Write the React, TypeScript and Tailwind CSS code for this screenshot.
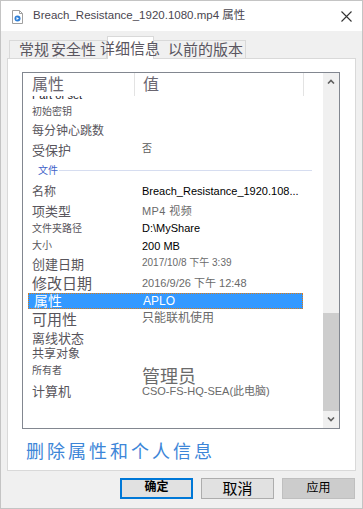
const font = "font-['Liberation_Sans','Noto_Sans_CJK_SC',sans-serif]";

type Row = {
  h: string;
  label: string;
  lc: string;
  value?: string;
  vc?: string;
  kind?: "group" | "selected" | "clip";
};

const rows: Row[] = [
  { h: "h-[6px]", label: "Part of set", lc: "text-[11px]", kind: "clip" },
  { h: "h-[19px]", label: "初始密钥", lc: "text-[10px]" },
  { h: "h-[20px]", label: "每分钟心跳数", lc: "text-[12px]" },
  { h: "h-[19px]", label: "受保护", lc: "text-[13px]", value: "否", vc: "text-[10px] text-[#5c5c5c] -mt-[3px]" },
  { h: "h-[21px]", label: "文件", lc: "", kind: "group" },
  { h: "h-[21px]", label: "名称", lc: "text-[12px]", value: "Breach_Resistance_1920.108...", vc: "text-[11px] text-black" },
  { h: "h-[18px]", label: "项类型", lc: "text-[13px]", value: "MP4 视频", vc: "text-[11px] text-[#6a6a6a] tracking-[0.4px]" },
  { h: "h-[17px]", label: "文件夹路径", lc: "text-[10px]", value: "D:\\MyShare", vc: "text-[11px] text-black" },
  { h: "h-[18px]", label: "大小", lc: "text-[10px]", value: "200 MB", vc: "text-[11px] text-black" },
  { h: "h-[19px]", label: "创建日期", lc: "text-[13px]", value: "2017/10/8 下午 3:39", vc: "text-[10px] text-[#6a6a6a] -mt-[3px]" },
  { h: "h-[19px]", label: "修改日期", lc: "text-[15px]", value: "2016/9/26 下午 12:48", vc: "text-[11px] text-[#6a6a6a]" },
  { h: "h-[16px]", label: "属性", lc: "text-[14px]", value: "APLO", vc: "text-[12px]", kind: "selected" },
  { h: "h-[21px]", label: "可用性", lc: "text-[15px]", value: "只能联机使用", vc: "text-[12px] text-[#6a6a6a] -mt-[4px]" },
  { h: "h-[16px]", label: "离线状态", lc: "text-[13px]" },
  { h: "h-[16px]", label: "共享对象", lc: "text-[12px]" },
  { h: "h-[22px]", label: "所有者", lc: "text-[10px] -mt-[4px]", value: "管理员", vc: "text-[18px] text-[#6a6a6a] mt-[8px]" },
  { h: "h-[15px]", label: "计算机", lc: "text-[13px]", value: "CSO-FS-HQ-SEA(此电脑)", vc: "text-[11px] text-[#6a6a6a] -mt-[1px]" },
];

const FileIcon = () => (
  <svg width="11" height="14" viewBox="0 0 11 14">
    <path d="M0.5 0.5h7l3 3v10h-10z" fill="#fff" stroke="#a0a0a0" />
    <path d="M7.5 0.5v3h3" fill="none" stroke="#a0a0a0" />
    <circle cx="5.5" cy="8.5" r="3" fill="#2f7fd6" />
    <path d="M4.5 7v3l2.5-1.5z" fill="#fff" />
  </svg>
);

const Chevron = ({ up }: { up?: boolean }) => (
  <svg width="8" height="5" viewBox="0 0 8 5">
    <path d={up ? "M1 4.5L4 1.5L7 4.5" : "M1 0.5L4 3.5L7 0.5"} fill="none" stroke="#606060" strokeWidth="1.6" />
  </svg>
);

const ListRow = ({ row }: { row: Row }) => {
  if (row.kind === "clip") {
    return (
      <div className={`${row.h} overflow-hidden pl-[9px]`}>
        <div className={`${row.lc} leading-[11px] -mt-[6px] text-[#1a1a2a]`}>{row.label}</div>
      </div>
    );
  }
  if (row.kind === "group") {
    return (
      <div className={`${row.h} flex items-center pl-[15px] pr-[11px]`}>
        <span className="text-[10px] leading-none text-[#3f63c8]">{row.label}</span>
        <span className="flex-1 h-px bg-[#d6ddf0] ml-[1px]" />
      </div>
    );
  }
  const sel = row.kind === "selected";
  return (
    <div
      className={`${row.h} ml-[5px] w-[275px] flex items-center ${
        sel ? "bg-[#3399ff] border border-dotted border-[#e07b12] text-white" : "text-[#58555c]"
      }`}
    >
      <div className={`w-[106px] shrink-0 ${sel ? "pl-[5px]" : "pl-[4px]"} whitespace-nowrap leading-none ${row.lc}`}>
        {row.label}
      </div>
      {row.value && (
        <div className={`pl-[8px] whitespace-nowrap leading-none ${row.vc}`}>{row.value}</div>
      )}
    </div>
  );
};

export default function App() {
  return (
    <div className={`w-[363px] h-[509px] bg-[#f0f0f0] border border-[#c4c4c4] flex flex-col ${font}`}>
      <div className="h-[30px] bg-white flex items-center shrink-0">
        <div className="ml-[11px] mt-[2px]">
          <FileIcon />
        </div>
        <span className="ml-[10px] text-[11.5px] text-[#4a4650]">
          Breach_Resistance_1920.1080.mp4 属性
        </span>
        <svg className="ml-auto mr-[10px]" width="11" height="11" viewBox="0 0 11 11">
          <path d="M0.5 0.5L10.5 10.5M10.5 0.5L0.5 10.5" stroke="#333" strokeWidth="1.1" />
        </svg>
      </div>

      <div className="flex items-end h-[27px] pl-[8px] shrink-0 text-[15px] text-[#5a5660] leading-none relative z-10">
        <div className="w-[48px] h-[18px] border border-b-0 border-[#d9d9d9] flex items-center whitespace-nowrap">
          <span className="ml-[9px]">常规</span>
        </div>
        <div className="w-[50px] h-[18px] border border-l-0 border-b-0 border-[#d9d9d9] flex items-center whitespace-nowrap">
          <span className="-ml-[6px]">安全性</span>
        </div>
        <div className="w-[47px] h-[23px] -mb-px bg-white border border-b-0 border-[#d9d9d9] flex items-center whitespace-nowrap">
          <span className="-ml-[8px]">详细信息</span>
        </div>
        <div className="w-[92px] h-[18px] border border-l-0 border-b-0 border-[#d9d9d9] flex items-center whitespace-nowrap">
          <span className="ml-[14px]">以前的版本</span>
        </div>
      </div>

      <div className="mx-[6px] h-[413px] bg-white border border-[#d9d9d9] shrink-0 flex flex-col">
        <div className="ml-[14px] mt-[13px] w-[318px] h-[357px] border border-[#828790] flex">
          <div className="flex-1 flex flex-col overflow-hidden">
            <div className="h-[23px] shrink-0 flex items-center text-[#6a6670]">
              <span className="w-[111px] pl-[9px] text-[16px] leading-none">属性</span>
              <span className="w-px h-[23px] bg-[#e3e3e3]" />
              <span className="w-[168px] pl-[8px] text-[16px] leading-none">值</span>
              <span className="w-px h-[23px] bg-[#e3e3e3]" />
            </div>
            {rows.map((r, i) => (
              <ListRow key={i} row={r} />
            ))}
          </div>
          <div className="w-[16px] bg-[#f0f0f0] flex flex-col">
            <div className="h-[17px] flex items-center justify-center">
              <Chevron up />
            </div>
            <div className="flex-1 flex flex-col justify-end">
              <div className="h-[98px] bg-[#cdcdcd]" />
            </div>
            <div className="h-[17px] flex items-center justify-center">
              <Chevron />
            </div>
          </div>
        </div>
        <div className="ml-[18px] mt-[13px] text-[18px] leading-[20px] tracking-[3px] text-[#3d86d8]">
          删除属性和个人信息
        </div>
      </div>

      <div className="flex justify-end gap-[8px] pr-[7px] mt-[7px]">
        <button className="w-[73px] h-[21px] bg-[#e1e1e1] border-2 border-[#0078d7] text-[12px] font-bold text-black leading-none pb-[3px]">
          确定
        </button>
        <button className="w-[73px] h-[21px] bg-[#e1e1e1] border border-[#adadad] text-[15px] text-black leading-none">
          取消
        </button>
        <button className="w-[73px] h-[21px] bg-[#cccccc] border border-[#bfbfbf] text-[12px] text-black leading-none pb-[2px]">
          应用
        </button>
      </div>
    </div>
  );
}
